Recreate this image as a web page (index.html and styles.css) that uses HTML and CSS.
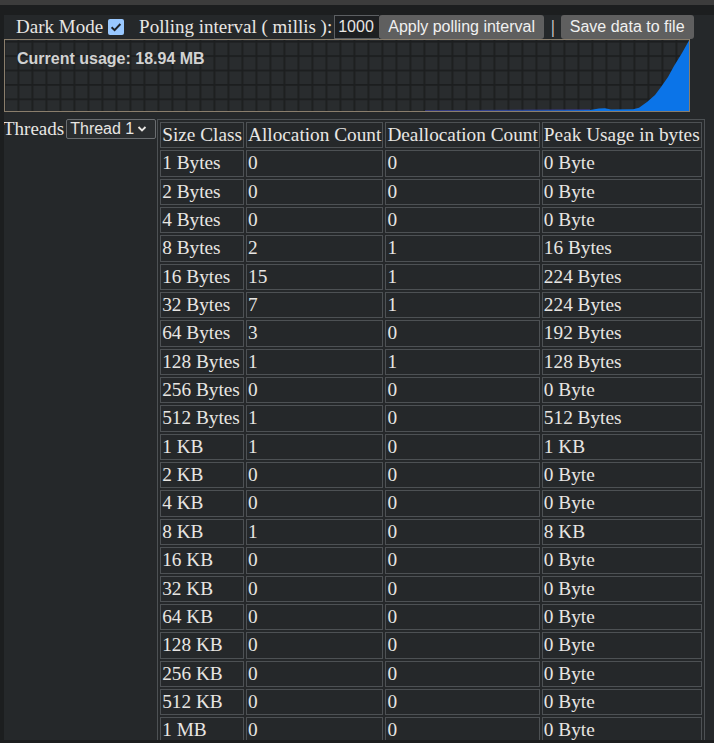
FILE: index.html
```html
<!DOCTYPE html>
<html>
<head>
<meta charset="utf-8">
<link rel="stylesheet" href="styles.css">
</head>
<body>
<div class="topbar"></div>
<div class="main">
  <div class="toolbar">
    <span class="label">Dark Mode</span>
    <span class="check"><svg width="16" height="16" viewBox="0 0 16 16"><path d="M3.6 8.2 L6.6 11.1 L12.4 5" fill="none" stroke="#1f2226" stroke-width="2"/></svg></span>
    <span class="label poll">Polling interval ( millis ):</span>
    <span class="input">1000</span>
    <span class="btn">Apply polling interval</span>
    <span class="pipe">|</span>
    <span class="btn">Save data to file</span>
  </div>
  <div class="chart">
    <svg width="684" height="71" viewBox="0 0 684 71">
      <defs>
        <pattern id="grid" x="-1.5" y="0.8" width="14" height="14.4" patternUnits="userSpaceOnUse">
          <rect width="14" height="14.4" fill="#292c2e"/>
          <rect x="0" y="0" width="1.8" height="14.4" fill="#1c1e1f"/>
          <rect x="0" y="0" width="14" height="1.8" fill="#1c1e1f"/>
        </pattern>
      </defs>
      <rect width="684" height="71" fill="url(#grid)"/>
      <path d="M420 71 L500 70.6 L585 70 L594 68.6 L600 68.3 L606 69.4 L628 69.2 L634 67.8 L642 62 L650 55 L656 47 L663 37 L669 26 L677 13 L684 0.5 L684 71 Z" fill="#0b74e8"/>
      <path d="M420 70.7 L500 70.3 L585 69.7" fill="none" stroke="#3a3f9a" stroke-width="0.8"/>
      <text x="12" y="24" class="usage">Current usage: 18.94 MB</text>
    </svg>
  </div>
  <div class="threads">
    <span class="tlabel">Threads</span>
    <div class="select">Thread 1<svg width="10" height="8" viewBox="0 0 10 8"><path d="M1.5 2 L5 5.5 L8.5 2" fill="none" stroke="#e8e6e3" stroke-width="1.8"/></svg></div>
    <table class="stats">
      <tr><th>Size Class</th><th>Allocation Count</th><th>Deallocation Count</th><th>Peak Usage in bytes</th></tr>
      <tr><td>1 Bytes</td><td>0</td><td>0</td><td>0 Byte</td></tr>
      <tr><td>2 Bytes</td><td>0</td><td>0</td><td>0 Byte</td></tr>
      <tr><td>4 Bytes</td><td>0</td><td>0</td><td>0 Byte</td></tr>
      <tr><td>8 Bytes</td><td>2</td><td>1</td><td>16 Bytes</td></tr>
      <tr><td>16 Bytes</td><td>15</td><td>1</td><td>224 Bytes</td></tr>
      <tr><td>32 Bytes</td><td>7</td><td>1</td><td>224 Bytes</td></tr>
      <tr><td>64 Bytes</td><td>3</td><td>0</td><td>192 Bytes</td></tr>
      <tr><td>128 Bytes</td><td>1</td><td>1</td><td>128 Bytes</td></tr>
      <tr><td>256 Bytes</td><td>0</td><td>0</td><td>0 Byte</td></tr>
      <tr><td>512 Bytes</td><td>1</td><td>0</td><td>512 Bytes</td></tr>
      <tr><td>1 KB</td><td>1</td><td>0</td><td>1 KB</td></tr>
      <tr><td>2 KB</td><td>0</td><td>0</td><td>0 Byte</td></tr>
      <tr><td>4 KB</td><td>0</td><td>0</td><td>0 Byte</td></tr>
      <tr><td>8 KB</td><td>1</td><td>0</td><td>8 KB</td></tr>
      <tr><td>16 KB</td><td>0</td><td>0</td><td>0 Byte</td></tr>
      <tr><td>32 KB</td><td>0</td><td>0</td><td>0 Byte</td></tr>
      <tr><td>64 KB</td><td>0</td><td>0</td><td>0 Byte</td></tr>
      <tr><td>128 KB</td><td>0</td><td>0</td><td>0 Byte</td></tr>
      <tr><td>256 KB</td><td>0</td><td>0</td><td>0 Byte</td></tr>
      <tr><td>512 KB</td><td>0</td><td>0</td><td>0 Byte</td></tr>
      <tr><td>1 MB</td><td>0</td><td>0</td><td>0 Byte</td></tr>
    </table>
  </div>
</div>
</body>
</html>
```
FILE: styles.css
```css
html, body {
  margin: 0;
  padding: 0;
  background: #1c1e1f;
  overflow: hidden;
}
body {
  width: 714px;
  height: 743px;
  font-family: "Liberation Serif", "Times New Roman", serif;
  font-size: 19px;
  color: #e8e6e3;
}
.topbar {
  height: 5px;
  background: #3c3c3c;
  margin-bottom: 10px;
}
.main {
  margin-left: 4px;
  height: 725px;
  background: #25282a;
  overflow: hidden;
}
.toolbar {
  display: flex;
  align-items: center;
  height: 24px;
  padding-left: 12px;
}
.label {
  line-height: 24px;
  white-space: nowrap;
}
.check {
  display: block;
  width: 16px;
  height: 16px;
  margin-left: 5px;
  border-radius: 2px;
  background: #99c8ff;
}
.check svg { display: block; }
.poll {
  margin-left: 15px;
}
.input {
  box-sizing: border-box;
  margin-left: 2px;
  width: 45px;
  height: 24px;
  padding: 0 0 0 3px;
  background: #1d1f21;
  border: 1px solid #5c5f62;
  border-right: none;
  font-family: "Liberation Sans", Arial, sans-serif;
  font-size: 16px;
  line-height: 22px;
}
.btn {
  box-sizing: border-box;
  height: 24px;
  padding: 0 9px;
  background: #5f5f5f;
  border-radius: 3px;
  color: #f0f0f0;
  font-family: "Liberation Sans", Arial, sans-serif;
  font-size: 16px;
  line-height: 24px;
  white-space: nowrap;
}
.pipe {
  margin: 0 6px 0 7px;
  line-height: 24px;
}
.chart {
  width: 684px;
  height: 71px;
  border: 1px solid #8a7e6c;
}
.chart svg { display: block; }
.usage {
  font-family: "Liberation Sans", Arial, sans-serif;
  font-size: 16px;
  font-weight: bold;
  fill: #d2d2d2;
}
.threads {
  display: flex;
  align-items: flex-start;
  margin-top: 7px;
}
.tlabel {
  line-height: 21px;
  margin-top: -1px;
  margin-left: -1px;
}
.select {
  box-sizing: border-box;
  display: flex;
  align-items: center;
  justify-content: space-between;
  width: 90px;
  height: 20px;
  margin-left: 2px;
  padding: 0 8px 0 3px;
  border: 1px solid #6a6d70;
  border-radius: 2px;
  background: #2a2d2f;
  font-family: "Liberation Sans", Arial, sans-serif;
  font-size: 16px;
  line-height: 18px;
}
.select svg { display: block; }
.stats {
  border: 1px solid #4d5154;
  border-spacing: 2px;
  margin-left: 1px;
  font-size: 19.3px;
}
.stats th, .stats td {
  border: 1px solid #4d5154;
  padding: 1px;
  line-height: 22.35px;
  text-align: left;
  font-weight: normal;
  white-space: nowrap;
}
```
